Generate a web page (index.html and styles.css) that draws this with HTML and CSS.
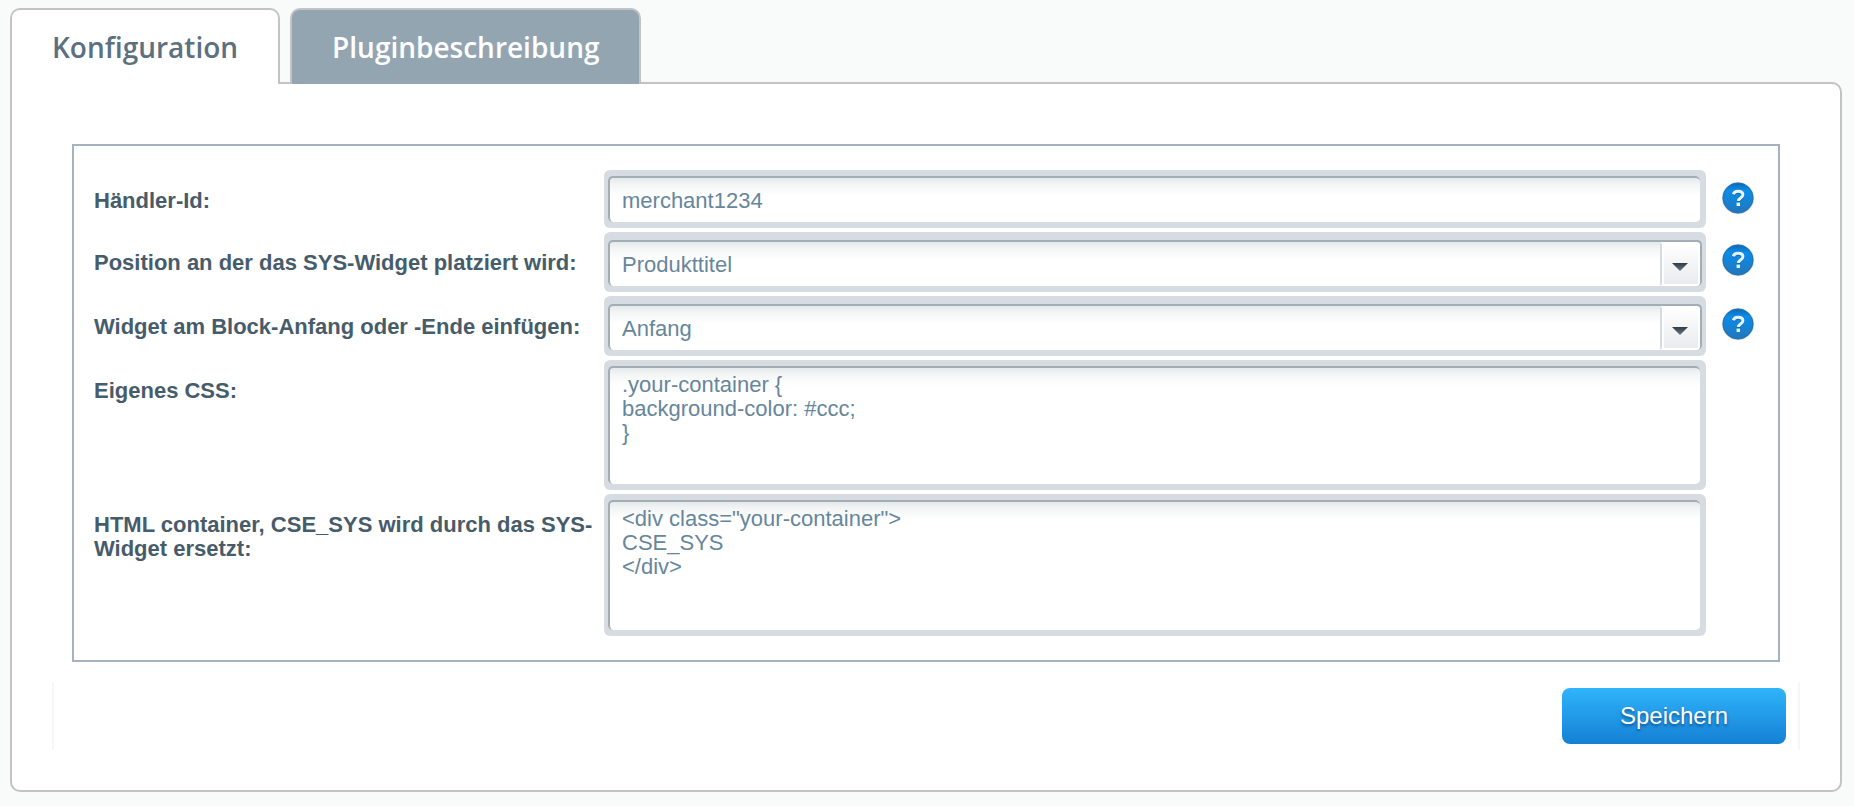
FILE: index.html
```html
<!DOCTYPE html>
<html lang="de">
<head>
<meta charset="utf-8">
<title>Konfiguration</title>
<link rel="stylesheet" href="styles.css">
</head>
<body>
<svg class="defs" width="0" height="0" aria-hidden="true">
  <defs>
    <linearGradient id="helpFill" x1="0" y1="0" x2="0" y2="1">
      <stop offset="0" stop-color="#0b6bb5"/>
      <stop offset="0.25" stop-color="#0b8cea"/>
      <stop offset="0.6" stop-color="#1683d4"/>
      <stop offset="1" stop-color="#2276b8"/>
    </linearGradient>
    <linearGradient id="arrowFill" x1="0" y1="0" x2="0" y2="1">
      <stop offset="0" stop-color="#2f3a41"/>
      <stop offset="1" stop-color="#6d7b86"/>
    </linearGradient>
    <symbol id="help" viewBox="0 0 32 32">
      <circle cx="16" cy="16" r="16" fill="#b5cde0"/>
      <circle cx="16" cy="16" r="15" fill="url(#helpFill)" stroke="#1f6fae" stroke-width="1"/>
      <path d="M11.400 12.400C12 10 13.600 9.300 16 9.300c3 0 4.900 1.300 4.900 3.500 0 3.200-4.500 3.200-4.500 6.200" fill="none" stroke="#0a5897" stroke-opacity=".6" stroke-width="3" transform="translate(0 1)"/>
      <path d="M11.400 12.400C12 10 13.600 9.300 16 9.300c3 0 4.900 1.300 4.900 3.500 0 3.200-4.500 3.200-4.500 6.200" fill="none" stroke="#eaf3fa" stroke-width="3"/>
      <rect x="14.600" y="20.600" width="3.400" height="3.400" fill="#eaf3fa"/>
    </symbol>
    <symbol id="arrow" viewBox="0 0 16 8">
      <path d="M0 0H16L8 8Z" fill="url(#arrowFill)"/>
    </symbol>
  </defs>
</svg>
<div class="tabs" role="tablist">
  <button class="tab tab-active" type="button" role="tab" aria-selected="true">Konfiguration</button>
  <button class="tab" type="button" role="tab" aria-selected="false">Pluginbeschreibung</button>
</div>
<form class="panel">
  <div class="group">
    <div class="row">
      <label class="label" for="merchant">Händler-Id:</label>
      <div class="field"><input class="control" id="merchant" type="text" value="merchant1234"></div>
      <button class="help" type="button" aria-label="Hilfe"><svg class="help-icon"><use href="#help"/></svg></button>
    </div>
    <div class="row">
      <label class="label" for="position">Position an der das SYS-Widget platziert wird:</label>
      <div class="field field-select">
        <select class="control" id="position"><option>Produkttitel</option></select>
        <span class="trigger"><svg class="arrow"><use href="#arrow"/></svg></span>
      </div>
      <button class="help" type="button" aria-label="Hilfe"><svg class="help-icon"><use href="#help"/></svg></button>
    </div>
    <div class="row">
      <label class="label" for="place">Widget am Block-Anfang oder -Ende einfügen:</label>
      <div class="field field-select">
        <select class="control" id="place"><option>Anfang</option></select>
        <span class="trigger"><svg class="arrow"><use href="#arrow"/></svg></span>
      </div>
      <button class="help" type="button" aria-label="Hilfe"><svg class="help-icon"><use href="#help"/></svg></button>
    </div>
    <div class="row">
      <label class="label" for="css">Eigenes CSS:</label>
      <div class="field"><textarea class="control area" id="css">.your-container {
background-color: #ccc;
}</textarea></div>
      <span class="help"></span>
    </div>
    <div class="row">
      <label class="label" for="html">HTML container, CSE_SYS wird durch das SYS-Widget ersetzt:</label>
      <div class="field"><textarea class="control area area-tall" id="html">&lt;div class="your-container"&gt;
CSE_SYS
&lt;/div&gt;</textarea></div>
      <span class="help"></span>
    </div>
  </div>
  <div class="toolbar">
    <button class="save" type="submit">Speichern</button>
  </div>
</form>
</body>
</html>
```

FILE: styles.css
```css
* {
  box-sizing: border-box;
}

body {
  margin: 0;
  padding: 8px 12px 14px 10px;
  background: #f9fbfa;
  font-family: "Liberation Sans", Arial, sans-serif;
  font-size: 22px;
  line-height: 24px;
}

.defs {
  position: absolute;
}

.tabs {
  display: flex;
  gap: 10px;
  margin-bottom: -2px;
  position: relative;
}

.tab {
  height: 76px;
  padding: 0 40px;
  border: 2px solid #c3c3c3;
  border-bottom: 0;
  border-radius: 10px 10px 0 0;
  background: #94a5b2;
  color: #fff;
  font: 600 28px/40px "Open Sans", sans-serif;
}

.tab-active {
  background: #fff;
  color: #5c7080;
}

.panel {
  padding: 60px 40px 40px;
  border: 2px solid #c3c3c3;
  border-radius: 0 10px 10px 10px;
  background: #fff;
}

.group {
  display: flex;
  flex-direction: column;
  gap: 4px;
  margin: 0 20px;
  padding: 24px 24px 24px 20px;
  border: 2px solid #a4b3bf;
}

.row {
  display: flex;
  align-items: flex-start;
}

.label {
  flex: 0 0 510px;
  padding: 19px 8px 0 0;
  color: #475c6a;
  font-weight: bold;
}

.field {
  position: relative;
  display: flex;
  flex: 1;
  min-width: 0;
  padding: 6px 6px 6px 4px;
  border-radius: 6px;
  background: #d7dce2;
}

.field-select {
  padding: 8px 4px 6px;
}

.control {
  flex: 1;
  min-width: 0;
  height: 46px;
  margin: 0;
  padding: 2px 12px 0;
  border: 0 solid #a2adb5;
  border-width: 2px 0 0 2px;
  border-radius: 5px;
  outline: 0;
  background: #fff linear-gradient(#e4e9e9, #f3f5f5 6px, #fff 18px);
  color: #66869b;
  font: inherit;
  appearance: none;
}

.field-select .control {
  border-right-width: 2px;
}

.area {
  display: block;
  height: 118px;
  padding-top: 5px;
  resize: none;
}

.area-tall {
  height: 130px;
}

.trigger {
  position: absolute;
  top: 10px;
  right: 6px;
  bottom: 6px;
  display: flex;
  align-items: center;
  justify-content: center;
  width: 40px;
  padding-top: 6px;
  border: 2px solid #fff;
  border-left-color: #d7dce2;
  border-radius: 0 4px 4px 0;
  background: linear-gradient(#fff, #e9ebee);
  box-shadow: inset 2px 0 #fff;
  pointer-events: none;
}

.arrow {
  width: 16px;
  height: 8px;
}

.help {
  flex: 0 0 32px;
  height: 32px;
  margin: 12px 0 0 16px;
  padding: 0;
  border: 0;
  background: none;
}

.help-icon {
  display: block;
  width: 32px;
  height: 32px;
}

.toolbar {
  display: flex;
  justify-content: flex-end;
  margin-top: 20px;
  padding: 6px 12px;
  border: solid #f5f6f6;
  border-width: 0 2px;
}

.save {
  width: 224px;
  height: 56px;
  border: 0;
  border-radius: 8px;
  background: linear-gradient(#2fb4fa, #1580d5);
  color: #fff;
  font: 24px/28px "Liberation Sans", Arial, sans-serif;
  text-shadow: 0 2px 3px rgba(0, 40, 90, 0.6);
}
```
